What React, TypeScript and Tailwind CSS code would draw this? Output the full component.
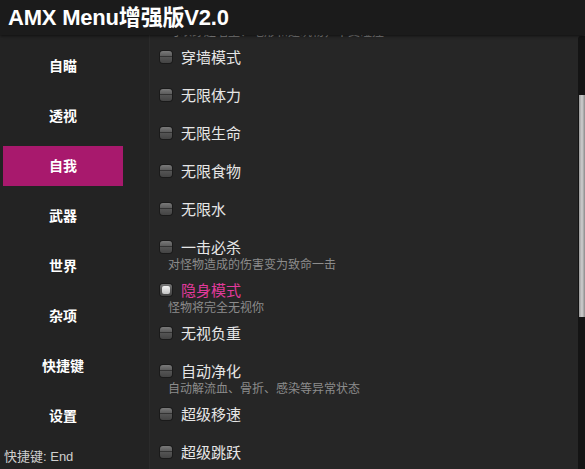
import React from "react";

type Item = { label: string; desc?: string; on?: boolean };

const tabs = ["自瞄", "透视", "自我", "武器", "世界", "杂项", "快捷键", "设置"];

const items: Item[] = [
  { label: "幽灵模式", desc: "可以穿越墙壁、地形和建筑物，不受碰撞" },
  { label: "穿墙模式" },
  { label: "无限体力" },
  { label: "无限生命" },
  { label: "无限食物" },
  { label: "无限水" },
  { label: "一击必杀", desc: "对怪物造成的伤害变为致命一击" },
  { label: "隐身模式", desc: "怪物将完全无视你", on: true },
  { label: "无视负重" },
  { label: "自动净化", desc: "自动解流血、骨折、感染等异常状态" },
  { label: "超级移速" },
  { label: "超级跳跃" },
];

const font = { fontFamily: '"Liberation Sans", "Noto Sans CJK SC", sans-serif' };

const Check: React.FC<{ on?: boolean }> = ({ on }) => (
  <span className="relative mt-[3px] h-[12px] w-[12px] shrink-0 rounded-[3px] bg-gradient-to-b from-[#7a7a7a] via-[#555555] to-[#444444] shadow-[0_0_0_1px_#1a1a1a]">
    {on ? (
      <span className="absolute inset-[2px] rounded-[2px] bg-gradient-to-b from-[#f4f4f4] to-[#c2c2c2]" />
    ) : (
      <span className="absolute left-0 right-0 top-[5px] h-px bg-[#333333]" />
    )}
  </span>
);

const Row: React.FC<{ item: Item }> = ({ item }) => (
  <div className={`flex gap-[9px] pl-[10px] pt-[9px] ${item.desc ? "pb-0" : "pb-[9px]"}`}>
    <Check on={item.on} />
    <div className="flex flex-col">
      <span className={`h-5 text-[15px] leading-5 ${item.on ? "text-[#e23a9c]" : "text-[#e6e6e6]"}`}>
        {item.label}
      </span>
      {item.desc && (
        <span className="-ml-[13px] text-[12px] leading-[14px] text-[#8c8c8c]">{item.desc}</span>
      )}
    </div>
  </div>
);

export default function App() {
  return (
    <div className="flex h-[469px] w-[585px] flex-col overflow-hidden bg-[#262626]" style={font}>
      <header className="z-10 flex h-[35px] shrink-0 items-center bg-[#1b1b1b] pl-[8px] shadow-[0_1px_3px_rgba(0,0,0,0.6)]">
        <h1 className="text-[22px] font-bold leading-none tracking-[-0.2px] text-white">AMX Menu增强版V2.0</h1>
      </header>

      <div className="flex min-h-0 flex-1">
        <aside className="flex w-[150px] shrink-0 flex-col border-r border-[#2b2b2b] bg-[#232323] pt-[11px]">
          <nav className="flex flex-col gap-[10px]">
            {tabs.map((t) => (
              <div
                key={t}
                className={`ml-[3px] flex h-10 w-[120px] items-center justify-center text-[14px] font-bold text-white ${
                  t === "自我" ? "bg-[#a8196d]" : ""
                }`}
              >
                {t}
              </div>
            ))}
          </nav>
          <div className="mt-auto pb-[4px] pl-[4px] text-[13px] leading-4 text-[#cfcfcf]">快捷键: End</div>
        </aside>

        <main className="relative min-w-0 flex-1 overflow-hidden">
          <div className="-mt-[39px] flex flex-col">
            {items.map((it) => (
              <Row key={it.label} item={it} />
            ))}
          </div>

          <div className="absolute bottom-0 right-0 top-px w-[7px] rounded-tl-[3px] bg-[#141414]">
            <div className="absolute left-px right-0 top-[59px] h-[222px] bg-gradient-to-r from-[#9a9a9a] via-[#cfcfcf] to-[#8a8a8a]" />
          </div>
        </main>
      </div>
    </div>
  );
}
